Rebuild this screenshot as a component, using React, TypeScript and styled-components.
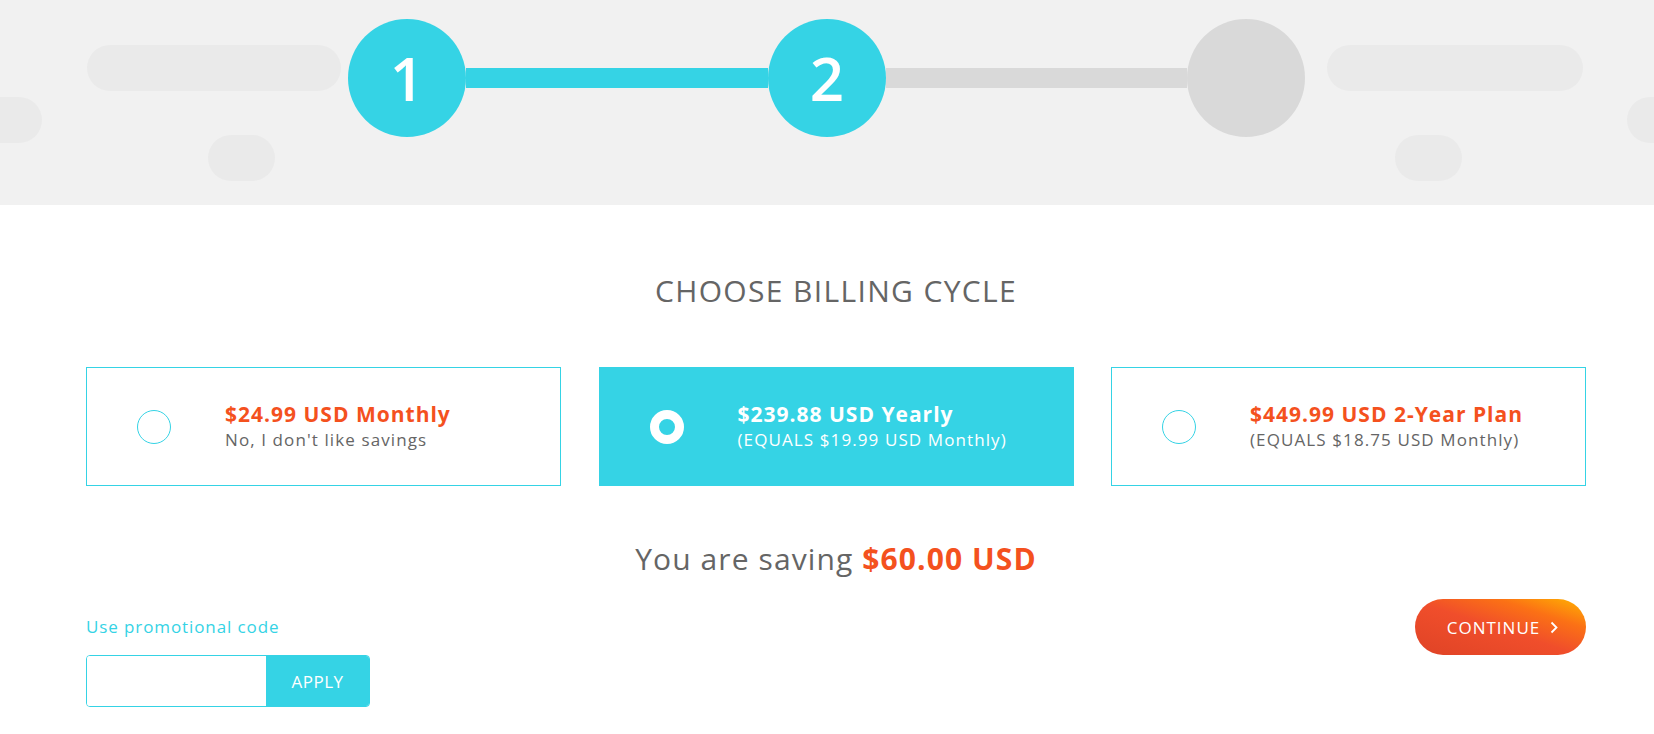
import React from "react";
import styled, { createGlobalStyle } from "styled-components";

const Global = createGlobalStyle`
  html, body { margin: 0; padding: 0; background: #fff; }
  body { font-family: "Open Sans", "Liberation Sans", sans-serif; width: 1654px; overflow: hidden; }
  * { box-sizing: border-box; }
`;

const BLUE = "#35d3e5";
const ORANGE = "#f4511e";
const GREY_TEXT = "#656565";

const Header = styled.header`
  position: relative;
  height: 205px;
  background: #f1f1f1;
  overflow: hidden;
  padding: 19px 0 0 348px;
`;

const Blob = styled.div<{ $x: number; $y: number; $w: number }>`
  position: absolute;
  left: ${(p) => p.$x}px;
  top: ${(p) => p.$y}px;
  width: ${(p) => p.$w}px;
  height: 46px;
  border-radius: 23px;
  background: #eaeaea;
`;

const Stepper = styled.div`
  position: relative;
  display: flex;
  align-items: center;
`;

const StepCircle = styled.div<{ $active: boolean }>`
  width: 118px;
  height: 118px;
  border-radius: 50%;
  background: ${(p) => (p.$active ? BLUE : "#d9d9d9")};
  color: #fff;
  display: flex;
  align-items: center;
  justify-content: center;
  font-size: 60px;
  font-weight: 600;
  flex: none;
`;

const StepLine = styled.div<{ $active: boolean; $w: number }>`
  width: ${(p) => p.$w}px;
  height: 20px;
  background: ${(p) => (p.$active ? BLUE : "#d9d9d9")};
  flex: none;
`;

const Main = styled.main`
  width: 1500px;
  margin-left: 86px;
  display: flex;
  flex-direction: column;
`;

const Title = styled.h2`
  margin: 66px 0 0;
  text-align: center;
  font-weight: 400;
  font-size: 30px;
  line-height: 40px;
  letter-spacing: 1.35px;
  color: ${GREY_TEXT};
`;

const Cards = styled.div`
  margin-top: 56px;
  display: grid;
  grid-template-columns: repeat(3, 475px);
  justify-content: space-between;
`;

const Card = styled.div<{ $selected: boolean }>`
  height: 119px;
  border: 1px solid ${BLUE};
  background: ${(p) => (p.$selected ? BLUE : "#fff")};
  display: flex;
  align-items: center;
  padding-left: 50px;
  cursor: pointer;
`;

const Radio = styled.span<{ $selected: boolean }>`
  width: 34px;
  height: 34px;
  border-radius: 50%;
  flex: none;
  border: ${(p) => (p.$selected ? "9px solid #fff" : `1px solid ${BLUE}`)};
  background: ${(p) => (p.$selected ? BLUE : "#fff")};
  margin-right: 54px;
`;

const CardText = styled.div`
  display: flex;
  flex-direction: column;
`;

const Price = styled.div<{ $selected: boolean }>`
  font-size: 21px;
  font-weight: 700;
  line-height: 26px;
  letter-spacing: 1px;
  color: ${(p) => (p.$selected ? "#fff" : ORANGE)};
`;

const Sub = styled.div<{ $selected: boolean }>`
  font-size: 17px;
  line-height: 26px;
  letter-spacing: 1.1px;
  color: ${(p) => (p.$selected ? "#fff" : GREY_TEXT)};
`;

const Saving = styled.div`
  margin-top: 53px;
  text-align: center;
  font-size: 30px;
  line-height: 40px;
  letter-spacing: 1.1px;
  color: ${GREY_TEXT};
`;

const SavingAmount = styled.strong`
  color: ${ORANGE};
  font-weight: 700;
`;

const Footer = styled.div`
  margin-top: 20px;
  display: flex;
  justify-content: space-between;
  align-items: flex-start;
`;

const Promo = styled.div`
  margin-top: 16px;
  display: flex;
  flex-direction: column;
`;

const PromoLink = styled.a`
  color: ${BLUE};
  font-size: 17px;
  line-height: 24px;
  letter-spacing: 0.9px;
  text-decoration: none;
`;

const PromoGroup = styled.div`
  margin-top: 16px;
  display: flex;
  height: 52px;
  width: 284px;
  border: 1px solid ${BLUE};
  border-radius: 4px;
  overflow: hidden;
`;

const PromoInput = styled.input`
  flex: 1;
  min-width: 0;
  border: none;
  outline: none;
  padding: 0 10px;
  font-size: 16px;
  background: #fff;
`;

const ApplyButton = styled.button`
  width: 103px;
  flex: none;
  border: none;
  background: ${BLUE};
  color: #fff;
  font-family: inherit;
  font-size: 17px;
  letter-spacing: 0.5px;
  padding: 0;
  cursor: pointer;
`;

const ContinueButton = styled.button`
  height: 56px;
  width: 171px;
  border: none;
  border-radius: 28px;
  background: linear-gradient(to top right, #df4326 0%, #f04e2b 48%, #fb7115 74%, #ffb400 100%);
  color: #fff;
  font-family: inherit;
  font-size: 17px;
  letter-spacing: 1px;
  display: flex;
  align-items: center;
  justify-content: center;
  gap: 10px;
  padding: 0 0 0 4px;
  cursor: pointer;
`;

const plans = [
  { price: "$24.99 USD Monthly", sub: "No, I don't like savings", selected: false },
  { price: "$239.88 USD Yearly", sub: "(EQUALS $19.99 USD Monthly)", selected: true },
  { price: "$449.99 USD 2-Year Plan", sub: "(EQUALS $18.75 USD Monthly)", selected: false },
];

export default function App() {
  return (
    <>
      <Global />
      <Header>
        <Blob $x={87} $y={45} $w={254} />
        <Blob $x={-30} $y={97} $w={72} />
        <Blob $x={208} $y={135} $w={67} />
        <Blob $x={1327} $y={45} $w={256} />
        <Blob $x={1395} $y={135} $w={67} />
        <Blob $x={1627} $y={97} $w={120} />
        <Stepper>
          <StepCircle $active>1</StepCircle>
          <StepLine $active $w={302} />
          <StepCircle $active>2</StepCircle>
          <StepLine $active={false} $w={301} />
          <StepCircle $active={false} />
        </Stepper>
      </Header>
      <Main>
        <Title>CHOOSE BILLING CYCLE</Title>
        <Cards>
          {plans.map((p) => (
            <Card key={p.price} $selected={p.selected}>
              <Radio $selected={p.selected} />
              <CardText>
                <Price $selected={p.selected}>{p.price}</Price>
                <Sub $selected={p.selected}>{p.sub}</Sub>
              </CardText>
            </Card>
          ))}
        </Cards>
        <Saving>
          You are saving <SavingAmount>$60.00 USD</SavingAmount>
        </Saving>
        <Footer>
          <Promo>
            <PromoLink href="#">Use promotional code</PromoLink>
            <PromoGroup>
              <PromoInput type="text" />
              <ApplyButton>APPLY</ApplyButton>
            </PromoGroup>
          </Promo>
          <ContinueButton>
            CONTINUE
            <svg width="8" height="13" viewBox="0 0 8 13" fill="none">
              <path d="M1.5 1.5l5 5-5 5" stroke="#fff" strokeWidth="1.8" />
            </svg>
          </ContinueButton>
        </Footer>
      </Main>
    </>
  );
}
